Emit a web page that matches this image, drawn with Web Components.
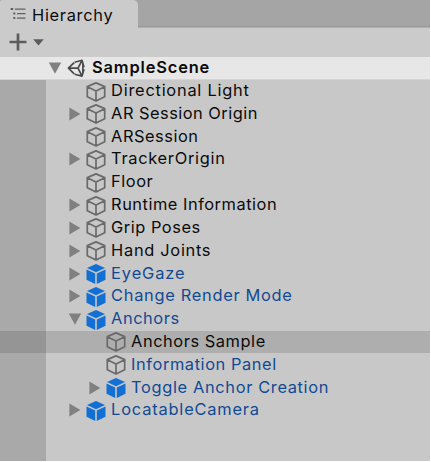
<!DOCTYPE html>
<html lang="en"><head><meta charset="utf-8"><title>Hierarchy</title>
<style>html{background:#fff}body{margin:0;width:430px;height:461px;overflow:hidden;font-family:Inter,"Liberation Sans",sans-serif;font-size:16.4px;color:#0b0b0b}</style></head>
<body>
<hierarchy-panel>
<panel-tab slot="tab">Hierarchy</panel-tab>
<tree-row kind="scene" arrow="open" depth="0" style="--ls:.85px">SampleScene</tree-row>
<tree-row depth="1" style="--ls:.76px">Directional Light</tree-row>
<tree-row depth="1" arrow="closed" style="--ls:.48px">AR Session Origin</tree-row>
<tree-row depth="1">ARSession</tree-row>
<tree-row depth="1" arrow="closed" style="--ls:.7px">TrackerOrigin</tree-row>
<tree-row depth="1">Floor</tree-row>
<tree-row depth="1" arrow="closed">Runtime Information</tree-row>
<tree-row depth="1" arrow="closed">Grip Poses</tree-row>
<tree-row depth="1" arrow="closed" style="--ls:.7px">Hand Joints</tree-row>
<tree-row depth="1" kind="prefab" arrow="closed" style="--ls:.9px">EyeGaze</tree-row>
<tree-row depth="1" kind="prefab" arrow="closed" style="--ls:.7px">Change Render Mode</tree-row>
<tree-row depth="1" kind="prefab" arrow="open" style="--ls:.55px">Anchors</tree-row>
<tree-row depth="2" selected style="--ls:.55px">Anchors Sample</tree-row>
<tree-row depth="2" blue style="--ls:.58px">Information Panel</tree-row>
<tree-row depth="2" kind="prefab" arrow="closed" style="--ls:.65px">Toggle Anchor Creation</tree-row>
<tree-row depth="1" kind="prefab" arrow="closed" style="--ls:.82px">LocatableCamera</tree-row>
</hierarchy-panel>
<script>
const GLYPHS = {
  cube: '<svg width="20" height="20" viewBox="0 0 20 20" fill="none" stroke="#6a6a6a" stroke-width="1.7" stroke-linejoin="round"><path d="M10 .9 18.7 4.6V14.7L10 19 1.3 14.7V4.6ZM1.3 4.8 10 8.9 18.7 4.8M10 8.9V19"/></svg>',
  prefab: '<svg width="20" height="20" viewBox="0 0 20 20" fill="#126fd3"><path d="M10 0 19 4 10 8.3 1 4ZM.5 5.4 9.2 9.5V20L.5 15.8ZM19.5 5.4 10.8 9.5V20l8.7-4.2Z"/></svg>',
  scene: '<svg width="20" height="20" viewBox="0 0 20 20" fill="none" stroke="#4a4a4a" stroke-width="1.7" stroke-linejoin="round"><path d="M8.6 3.2 16 1.3 18 8.2M18 10.2 16 17.1 8.6 15.2M8.2 3.6 2.4 9.2 8.2 14.8M2.6 9.2H12M15.8 1.8 12 9.2 15.8 16.6M16.9 4.8V13.6"/></svg>',
  open: '<svg width="14" height="12" viewBox="0 0 14 12"><path d="M.8.5H13.2L7 11.8Z" fill="#808080"/></svg>',
  closed: '<svg width="12" height="14" viewBox="0 0 12 14"><path d="M.4.6 11.4 7 .4 13.4Z" fill="#808080"/></svg>'
};
customElements.define('hierarchy-glyph', class extends HTMLElement {
  connectedCallback() {
    this.attachShadow({mode:'open'}).innerHTML = '<style>:host{display:flex;align-items:center;justify-content:center}svg{display:block}</style>' + (GLYPHS[this.getAttribute('name')] || '');
  }
});
customElements.define('panel-tab', class extends HTMLElement {
  connectedCallback() {
    this.attachShadow({mode:'open'}).innerHTML = `<style>
:host{display:flex;box-sizing:border-box;width:138px;height:28px;padding:2px 0 0 10px;background:#cbcbcb;border-radius:2px 5px 0 0;gap:6px;letter-spacing:.7px}
svg{display:block;margin-top:5px}span{line-height:26px;white-space:nowrap}</style>
<svg width="16" height="14" viewBox="0 0 16 14" fill="#606060"><path d="M.7 1h2.5v2H.7zM5 1.4h10.5v1.3H5zM3.3 5.5h2v2h-2zM7 5.9h8.5v1.3H7zM3.3 10h2v2h-2zM7 10.4h8.5v1.3H7z"/></svg>
<span><slot></slot></span>`;
  }
});
customElements.define('tree-row', class extends HTMLElement {
  connectedCallback() {
    const depth = +this.getAttribute('depth');
    const kind = this.getAttribute('kind') || 'cube';
    this.attachShadow({mode:'open'}).innerHTML = `<style>
:host{display:flex;height:22.82px;box-sizing:border-box;padding-left:${46 + depth * 20}px;align-items:center;letter-spacing:var(--ls,.52px)}
:host([kind=scene]){background:#e7e7e7;font-weight:600;box-shadow:inset 0 -1px #d5d5d5}
:host([kind=prefab]),:host([blue]){color:#114a94}
:host([selected]){background:linear-gradient(90deg,#959595 46px,#aeaeae 46px)}
.arrow{width:18px;height:20px;flex:none}.icon{width:20px;height:20px;flex:none;margin:1px 5.6px 0 1.5px}
:host([kind=scene]) .icon{margin-right:6.6px}
span{white-space:nowrap;line-height:20px;padding-bottom:2px}</style>
<hierarchy-glyph class="arrow" name="${this.getAttribute('arrow') || ''}"></hierarchy-glyph><hierarchy-glyph class="icon" name="${kind}"></hierarchy-glyph><span><slot></slot></span>`;
  }
});
customElements.define('hierarchy-panel', class extends HTMLElement {
  connectedCallback() {
    this.attachShadow({mode:'open'}).innerHTML = `<style>
:host{display:flex;flex-direction:column;width:430px;height:461px;background:#c8c8c8;overflow:hidden}
header{height:28px;flex:none;background:#a5a5a5;box-shadow:inset 0 -1px #b0b0b0,inset 0 -2px #9b9b9b}
.tools{height:28.8px;flex:none;background:#cbcbcb;box-sizing:border-box;padding:5px 0 0 9px;display:flex;gap:6px}
.tools svg{display:block}
main{flex:1;background:linear-gradient(90deg,#a9a9a9 46px,#c8c8c8 46px)}</style>
<header><slot name="tab"></slot></header>
<div class="tools"><svg width="18" height="18" viewBox="0 0 18 18"><path d="M9 .5v17M.5 9h17" stroke="#5c5c5c" stroke-width="2.7"/></svg><svg width="11" height="18" viewBox="0 0 11 18"><path d="M.2 6.2h10.6L5.5 12.5Z" fill="#5c5c58"/></svg></div>
<main><slot></slot></main>`;
  }
});
</script></body></html>
